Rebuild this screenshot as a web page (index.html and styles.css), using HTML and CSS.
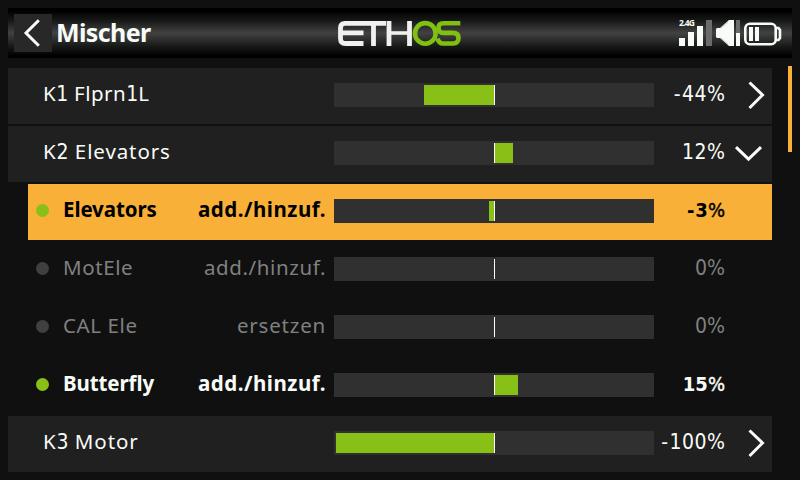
FILE: index.html
```html
<!DOCTYPE html>
<html lang="de">
<head>
<meta charset="utf-8">
<title>Mischer</title>
<link rel="stylesheet" href="styles.css">
</head>
<body>
<header class="topbar">
  <div class="back"><svg width="38" height="38" viewBox="0 0 38 38"><path class="chev" d="M24.8 6.2 12 19 24.8 31.8"/></svg></div>
  <h1>Mischer</h1>
  <svg class="logo" width="126" height="30" viewBox="0 0 126 30">
    <g class="logo-white">
      <path d="M49 3.3H8Q3.5 3.3 3.5 8V18.5Q3.5 23.5 8.5 23.5H26.5M4 12.8H26.5M36.5 4V26M52 1V26M72.5 1V26"/>
      <path class="thin" d="M52 13H73"/>
    </g>
    <g class="logo-green"><circle cx="88.3" cy="13.4" r="10.3"/><path d="M123.3 3.3H106.5Q101.5 3.3 101.5 8T106.5 12.9H116Q121.5 12.9 121.5 18.2T116 23.5H106Q102 23.5 100.5 18.5"/></g>
  </svg>
  <svg class="status" width="104" height="30" viewBox="0 0 104 30">
    <text class="band" x="0" y="8" textLength="16">2.4G</text>
    <path class="on" d="M0 20h6v8H0zM9 14h6v14H9zM18 8h6v20h-6zM57 15h4v13h-4z"/>
    <path class="off" d="M27 2h6v26h-6zM57 2h4v13h-4z"/>
    <path class="on" d="M38 10h3L50 2h5v26h-5l-9-8h-3l-1-1v-8z"/>
    <path class="fold" d="M42 10 49 4M42 20l7 6"/>
    <rect class="cell" x="66.3" y="5.8" width="30.4" height="20.4" rx="4.5"/>
    <path class="cell" d="M97 10h2.5l1.5 2v8l-1.5 2H97"/>
    <path class="on" d="M70 9h4v14h-4zM76 9h4v14h-4z"/>
  </svg>
</header>
<div class="body">
  <main class="rows">
    <div class="row group"><span class="name tight">K<i>1</i> Flprn<i>1</i>L</span><span class="bar"><b class="neg" style="width:70px"></b></span><span class="value"><u>-</u>44<em>%</em></span><svg class="arrow" width="40" height="56"><path class="chev" d="M17.5 14.5 30.5 27 17.5 40"/></svg></div>
    <div class="row group"><span class="name">K<i>2</i> Elevators</span><span class="bar"><b class="pos" style="width:18px"></b></span><span class="value">12<em>%</em></span><svg class="arrow" width="40" height="56"><path class="chev" d="M4 21.2 16.5 33.2 29 21.2"/></svg></div>
    <div class="row child selected"><span class="dot"></span><span class="name">Elevators</span><span class="mode">add./hinzuf.</span><span class="bar"><b class="neg" style="width:5px"></b></span><span class="value"><u>-</u>3<em>%</em></span></div>
    <div class="row child inactive"><span class="dot"></span><span class="name">MotEle</span><span class="mode">add./hinzuf.</span><span class="bar"></span><span class="value">0<em>%</em></span></div>
    <div class="row child inactive"><span class="dot"></span><span class="name">CAL Ele</span><span class="mode replace">ersetzen</span><span class="bar"></span><span class="value">0<em>%</em></span></div>
    <div class="row child active"><span class="dot"></span><span class="name">Butterfly</span><span class="mode">add./hinzuf.</span><span class="bar"><b class="pos" style="width:23px"></b></span><span class="value">15<em>%</em></span></div>
    <div class="row group"><span class="name">K<i>3</i> Motor</span><span class="bar"><b class="neg" style="width:158px"></b></span><span class="value"><u>-</u>100<em>%</em></span><svg class="arrow" width="40" height="56"><path class="chev" d="M17.5 14.5 30.5 27 17.5 40"/></svg></div>
  </main>
  <div class="scroll"></div>
</div>
</body>
</html>
```
FILE: styles.css
```css
* { box-sizing: border-box; }
body { margin: 0; width: 800px; height: 480px; padding: 8px; background: #101010; color: #f8fcf8; font: 20.5px/30px "Noto Sans", sans-serif; overflow: hidden; }
.topbar { height: 50px; display: flex; align-items: center; padding-left: 6px; background: linear-gradient(#000 0, #000 3px, #181a18 13px, #424242 25px, #181a18 38px, #000 48px); }
.back { width: 38px; height: 38px; background: #292829; }
svg { display: block; flex: none; }
.chev { fill: none; stroke: #f8fcf8; stroke-width: 3; }
h1 { margin: 0 0 0 4px; width: 281px; font-size: 25px; line-height: 48px; height: 50px; letter-spacing: -.6px; font-weight: 700; }
.logo { margin-top: 3px; }
.logo-white { fill: none; stroke: #f0f0f0; stroke-width: 4.8; }
.logo-white .thin { stroke-width: 3.6; }
.logo-green { fill: none; stroke: #80c010; stroke-width: 4.6; }
.status { margin-left: 216px; }
.on { fill: #f8fcf8; }
.off { fill: #6b6b6b; }
.fold { fill: none; stroke: #b8b8b8; stroke-width: .7; }
.cell { fill: none; stroke: #f8fcf8; stroke-width: 2.6; }
.band { fill: #f8fcf8; font: 700 8.5px "Noto Sans", sans-serif; }
.body { display: flex; justify-content: space-between; padding-top: 8px; }
.rows { width: 764px; padding-top: 2px; display: grid; gap: 2px; }
.row { height: 56px; display: flex; align-items: flex-start; }
.group { background: #202020; padding-left: 35px; }
.child { margin-left: 20px; padding-left: 8px; font-weight: 700; }
.name, .mode, .value { flex: none; padding-top: 10px; white-space: pre; }
.name { letter-spacing: .9px; }
.name.tight { letter-spacing: .5px; }
.group .name { width: 291px; }
.child .name { width: 127px; letter-spacing: -.1px; }
.mode { width: 144px; text-align: right; padding-right: 8px; letter-spacing: .5px; }
.name i, .value { font-family: "DejaVu Sans Condensed", "DejaVu Sans", sans-serif; font-stretch: condensed; font-style: normal; font-size: 21px; letter-spacing: .5px; }
.name i { line-height: 1; letter-spacing: 0; }
.value em { font-style: normal; font-weight: 400; letter-spacing: 0; }
.value u { text-decoration: none; margin-right: 1px; }
.selected em, .active em { -webkit-text-stroke: .4px currentColor; }
.dot { flex: none; width: 13px; height: 13px; margin: 20px 14px 0 0; border-radius: 50%; background: #88c018; }
.bar { flex: none; position: relative; width: 320px; height: 24px; margin-top: 15px; background: #303030; }
.bar::after { content: ""; position: absolute; left: 160px; top: 2px; width: 1px; height: 20px; background: #fff; }
.bar b { position: absolute; top: 2px; height: 20px; background: #88c018; }
.neg { right: 160px; }
.pos { left: 161px; }
.value { width: 71px; padding-top: 11px; text-align: right; }
.child .value { font-size: 20px; letter-spacing: 0; }
.inactive .value { font-size: 21px; }
.arrow { margin-left: 7px; }
.selected { background: #f8b038; color: #000; }
.inactive { color: #808080; font-weight: 400; }
.child.inactive .name, .inactive .mode { letter-spacing: .6px; }
.inactive .mode.replace { letter-spacing: .8px; }
.inactive .dot { background: #404040; }
.scroll { width: 4px; height: 86px; background: #f8b038; }
```
